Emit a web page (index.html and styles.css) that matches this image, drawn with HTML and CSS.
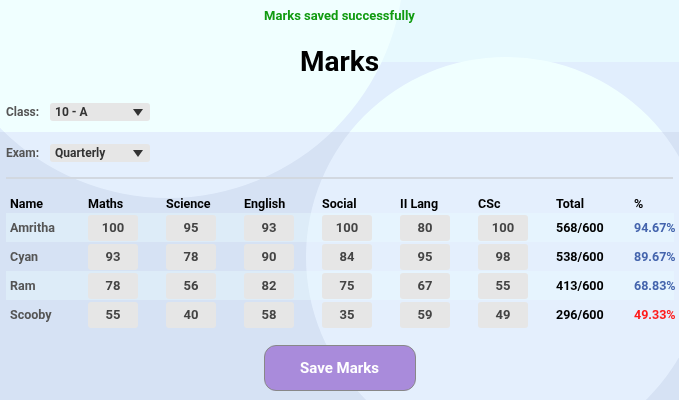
FILE: index.html
```html
<!DOCTYPE html>
<html lang="en">
<head>
<meta charset="UTF-8">
<meta name="viewport" content="width=device-width, initial-scale=1.0">
<title>Marks</title>
<link rel="stylesheet" href="styles.css">
</head>
<body>
  <div class="backdrop">
    <div class="circle circle-left"></div>
    <div class="circle circle-right"></div>
  </div>

  <div class="page">
    <p class="msg">Marks saved successfully</p>
    <h1>Marks</h1>

    <div class="filter">
      <label>Class:</label>
      <div class="select">
        <span>10 - A</span>
        <svg width="10" height="7" viewBox="0 0 10 7"><path d="M0 0 L10 0 L5 7 Z" fill="#333"/></svg>
      </div>
    </div>

    <div class="filter exam">
      <label>Exam:</label>
      <div class="select">
        <span>Quarterly</span>
        <svg width="10" height="7" viewBox="0 0 10 7"><path d="M0 0 L10 0 L5 7 Z" fill="#333"/></svg>
      </div>
    </div>

    <hr class="line">

    <table class="marks">
      <colgroup>
        <col class="col-name">
        <col class="col-sub"><col class="col-sub"><col class="col-sub"><col class="col-sub">
        <col class="col-sub"><col class="col-sub"><col class="col-sub">
        <col>
      </colgroup>
      <thead>
        <tr>
          <th class="name">Name</th>
          <th>Maths</th>
          <th>Science</th>
          <th>English</th>
          <th>Social</th>
          <th>II Lang</th>
          <th>CSc</th>
          <th>Total</th>
          <th>%</th>
        </tr>
      </thead>
      <tbody>
        <tr>
          <td class="name">Amritha</td>
          <td><div class="mark">100</div></td>
          <td><div class="mark">95</div></td>
          <td><div class="mark">93</div></td>
          <td><div class="mark">100</div></td>
          <td><div class="mark">80</div></td>
          <td><div class="mark">100</div></td>
          <td class="total">568/600</td>
          <td class="pct">94.67%</td>
        </tr>
        <tr>
          <td class="name">Cyan</td>
          <td><div class="mark">93</div></td>
          <td><div class="mark">78</div></td>
          <td><div class="mark">90</div></td>
          <td><div class="mark">84</div></td>
          <td><div class="mark">95</div></td>
          <td><div class="mark">98</div></td>
          <td class="total">538/600</td>
          <td class="pct">89.67%</td>
        </tr>
        <tr>
          <td class="name">Ram</td>
          <td><div class="mark">78</div></td>
          <td><div class="mark">56</div></td>
          <td><div class="mark">82</div></td>
          <td><div class="mark">75</div></td>
          <td><div class="mark">67</div></td>
          <td><div class="mark">55</div></td>
          <td class="total">413/600</td>
          <td class="pct">68.83%</td>
        </tr>
        <tr>
          <td class="name">Scooby</td>
          <td><div class="mark">55</div></td>
          <td><div class="mark">40</div></td>
          <td><div class="mark">58</div></td>
          <td><div class="mark">35</div></td>
          <td><div class="mark">59</div></td>
          <td><div class="mark">49</div></td>
          <td class="total">296/600</td>
          <td class="pct fail">49.33%</td>
        </tr>
      </tbody>
    </table>

    <div class="actions">
      <button class="save">Save Marks</button>
    </div>
  </div>
</body>
</html>
```

FILE: styles.css
```css
html, body {
  margin: 0;
  padding: 0;
}

body {
  font-family: Roboto, "Liberation Sans", Arial, sans-serif;
  background: linear-gradient(to bottom, #e7f9fe 0, #e7f9fe 62px, #e1eefd 62px, #e1eefd 132px, #d6e2f4 132px);
  background-attachment: fixed;
}

/* background blobs */
.backdrop {
  position: fixed;
  top: 0;
  left: 0;
  right: 0;
  bottom: 0;
  overflow: hidden;
  z-index: 0;
}

.circle {
  position: absolute;
  border-radius: 50%;
  background: linear-gradient(to bottom, #f0ffff 0, #f0ffff 132px, #e4effd 132px);
  background-attachment: fixed;
}

.circle-left {
  left: -68px;
  top: -274px;
  width: 472px;
  height: 472px;
}

.circle-right {
  left: 306px;
  top: 57px;
  width: 400px;
  height: 400px;
}

.page {
  position: relative;
  z-index: 1;
  padding: 0 6px;
}

.msg {
  margin: 0;
  padding-top: 8px;
  text-align: center;
  color: #119b11;
  font-size: 13px;
  font-weight: bold;
  line-height: 16px;
}

h1 {
  margin: 22px 0 0;
  text-align: center;
  font-size: 28px;
  line-height: 32px;
  color: #000;
}

.filter {
  display: flex;
  align-items: center;
  margin-top: 25px;
  height: 18px;
}

.filter.exam {
  margin-top: 23px;
}

.filter label {
  width: 44px;
  color: #555;
  font-size: 12px;
  font-weight: bold;
}

.select {
  width: 100px;
  height: 18px;
  box-sizing: border-box;
  padding: 0 7px 0 5px;
  display: flex;
  align-items: center;
  justify-content: space-between;
  background-color: #e6e6e6;
  border-radius: 3px;
  color: #333;
  font-size: 12px;
  font-weight: bold;
}

.line {
  margin: 15px 0 0;
  border: none;
  height: 2px;
  background-color: #d2d8e0;
}

.marks {
  margin-top: 14px;
  width: 668px;
  table-layout: fixed;
  border-collapse: collapse;
  font-size: 12.5px;
}

.col-name {
  width: 82px;
}

.col-sub {
  width: 78px;
}

.marks th {
  text-align: left;
  height: 20px;
  padding: 0;
  color: #000;
  font-weight: bold;
}

.marks td {
  height: 29px;
  padding: 0;
  font-weight: bold;
}

.marks .name {
  padding-left: 4px;
}

.marks td.name {
  color: #555;
}

.marks tbody tr:nth-child(odd) {
  background-color: rgba(236, 255, 255, 0.35);
}

.mark {
  width: 50px;
  height: 26px;
  line-height: 26px;
  background-color: #e6e6e6;
  border-radius: 3px;
  text-align: center;
  color: #444;
  font-size: 13px;
}

.total {
  color: #000;
}

.pct {
  color: #4464ad;
}

.pct.fail {
  color: #ff1a1a;
}

.actions {
  display: flex;
  justify-content: center;
  margin-top: 16px;
}

.save {
  width: 152px;
  height: 46px;
  background-color: #a98bdb;
  border: 1px solid #888;
  border-radius: 12px;
  color: #fff;
  font-family: inherit;
  font-size: 15px;
  font-weight: bold;
}
```
